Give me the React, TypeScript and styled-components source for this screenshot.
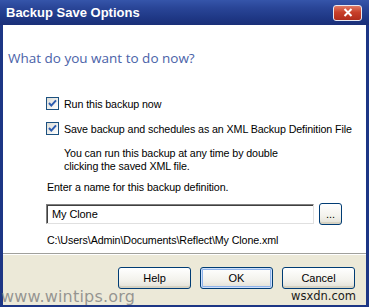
import styled, { createGlobalStyle } from "styled-components";

const GlobalStyle = createGlobalStyle`
  html, body {
    margin: 0;
    padding: 0;
    background: #ffffff;
  }
`;

const Window = styled.div`
  position: relative;
  width: 369px;
  height: 307px;
  box-sizing: border-box;
  display: flex;
  flex-direction: column;
  background: #1d3685;
  padding: 0 3px 2px 3px;
  overflow: hidden;
  font-family: "Liberation Sans", Arial, sans-serif;
  font-size: 10.7px;
  letter-spacing: -0.1px;
  color: #000;
`;

const TitleBar = styled.div`
  height: 25px;
  flex-shrink: 0;
  margin: 0 -3px;
  padding: 0 7px 0 6px;
  display: flex;
  align-items: center;
  justify-content: space-between;
  background: linear-gradient(#3555aa 0%, #2a4698 30%, #1f3886 70%, #1a2f78 100%);
`;

const TitleText = styled.span`
  color: #fff;
  font-family: "Liberation Sans", Arial, sans-serif;
  font-weight: bold;
  font-size: 13px;
  letter-spacing: 0;
`;

const CloseButton = styled.div`
  width: 29px;
  height: 16px;
  border-radius: 3px;
  border: 1px solid #e8e8f0;
  background: linear-gradient(#e07a64, #c8402a 45%, #b02d1c);
  display: flex;
  align-items: center;
  justify-content: center;
  box-sizing: border-box;
`;

const Body = styled.div`
  flex: 1;
  background: #fff;
  display: flex;
  flex-direction: column;
`;

const Heading = styled.div`
  margin: 25px 0 0 5px;
  height: 16px;
  font-family: "Open Sans", sans-serif;
  font-size: 13.5px;
  font-weight: 400;
  letter-spacing: 0;
  color: #4a62a8;
  line-height: 16px;
`;

const Options = styled.div`
  margin: 31px 0 0 43px;
  display: flex;
  flex-direction: column;
`;

const CheckRow = styled.label<{ $top?: number }>`
  display: flex;
  align-items: center;
  gap: 5px;
  height: 13px;
  white-space: nowrap;
  margin-top: ${(p) => p.$top ?? 0}px;
`;

const Box = styled.span`
  width: 11px;
  height: 11px;
  border: 1px solid #1c5180;
  background: linear-gradient(135deg, #dcdcd6, #fff);
  display: flex;
  align-items: center;
  justify-content: center;
`;

const Note = styled.div`
  margin: 12px 0 0 18px;
  line-height: 13px;
`;

const Prompt = styled.div`
  margin: 8px 0 0 1px;
  line-height: 13px;
`;

const InputRow = styled.div`
  margin-top: 9px;
  display: flex;
  align-items: center;
  gap: 5px;
`;

const NameInput = styled.div`
  width: 268px;
  height: 20px;
  box-sizing: border-box;
  border: 1px solid;
  border-color: #7f7f7f #e0e0e0 #e0e0e0 #7f7f7f;
  box-shadow: inset 1px 1px 0 #404040;
  padding: 3px 0 0 5px;
  font-size: 11px;
`;

const Path = styled.div`
  margin: 9px 0 0 1px;
  line-height: 13px;
`;

const Footer = styled.div`
  height: 52px;
  box-sizing: border-box;
  flex-shrink: 0;
  background: #ece9d8;
  border-top: 1px solid #a0a09c;
  box-shadow: inset 0 1px 0 #fff;
  display: flex;
  justify-content: flex-end;
  align-items: flex-start;
  gap: 9px;
  padding: 13px 11px 0 0;
`;

const XPButton = styled.div<{ $w?: number; $focus?: boolean }>`
  width: ${(p) => p.$w ?? 73}px;
  height: 22px;
  box-sizing: border-box;
  border: 1px solid #003c74;
  border-radius: 3px;
  background: linear-gradient(#ffffff, #f3f2ec 60%, #e2e0d6);
  box-shadow: ${(p) =>
    p.$focus
      ? "inset 0 0 0 1px #cfe0fa, inset 0 0 0 2px #8fb3ea"
      : "inset 0 -2px 0 #d6d2c2"};
  display: flex;
  align-items: center;
  justify-content: center;
  font-size: 11px;
  letter-spacing: 0;
`;

const Watermark = styled.div`
  position: absolute;
  left: 1px;
  bottom: 1px;
  font-family: "DejaVu Sans", Verdana, sans-serif;
  font-size: 16px;
  line-height: 18px;
  color: rgba(120, 120, 120, 0.75);
  letter-spacing: 0.2px;
`;

const SiteMark = styled.div`
  position: absolute;
  right: 13px;
  bottom: 4px;
  font-family: "DejaVu Sans", Verdana, sans-serif;
  font-size: 11.5px;
  letter-spacing: 0;
  color: #1a1a1a;
`;

function Check() {
  return (
    <svg width="9" height="9" viewBox="0 0 9 9">
      <path d="M1 4 L3.3 6.6 L8 1.4" stroke="#2d5cb0" strokeWidth="2" fill="none" />
    </svg>
  );
}

export default function App() {
  return (
    <>
      <GlobalStyle />
      <Window>
        <TitleBar>
          <TitleText>Backup Save Options</TitleText>
          <CloseButton>
            <svg width="10" height="9" viewBox="0 0 10 9">
              <path d="M1.5 1 L8.5 8 M8.5 1 L1.5 8" stroke="#fff" strokeWidth="2" />
            </svg>
          </CloseButton>
        </TitleBar>
        <Body>
          <Heading>What do you want to do now?</Heading>
          <Options>
            <CheckRow>
              <Box>
                <Check />
              </Box>
              Run this backup now
            </CheckRow>
            <CheckRow $top={12}>
              <Box>
                <Check />
              </Box>
              Save backup and schedules as an XML Backup Definition File
            </CheckRow>
            <Note>
              You can run this backup at any time by double
              <br />
              clicking the saved XML file.
            </Note>
            <Prompt>Enter a name for this backup definition.</Prompt>
            <InputRow>
              <NameInput>My Clone</NameInput>
              <XPButton $w={23}>...</XPButton>
            </InputRow>
            <Path>C:\Users\Admin\Documents\Reflect\My Clone.xml</Path>
          </Options>
        </Body>
        <Footer>
          <XPButton>Help</XPButton>
          <XPButton $focus>OK</XPButton>
          <XPButton>Cancel</XPButton>
        </Footer>
        <Watermark>www.wintips.org</Watermark>
        <SiteMark>wsxdn.com</SiteMark>
      </Window>
    </>
  );
}
